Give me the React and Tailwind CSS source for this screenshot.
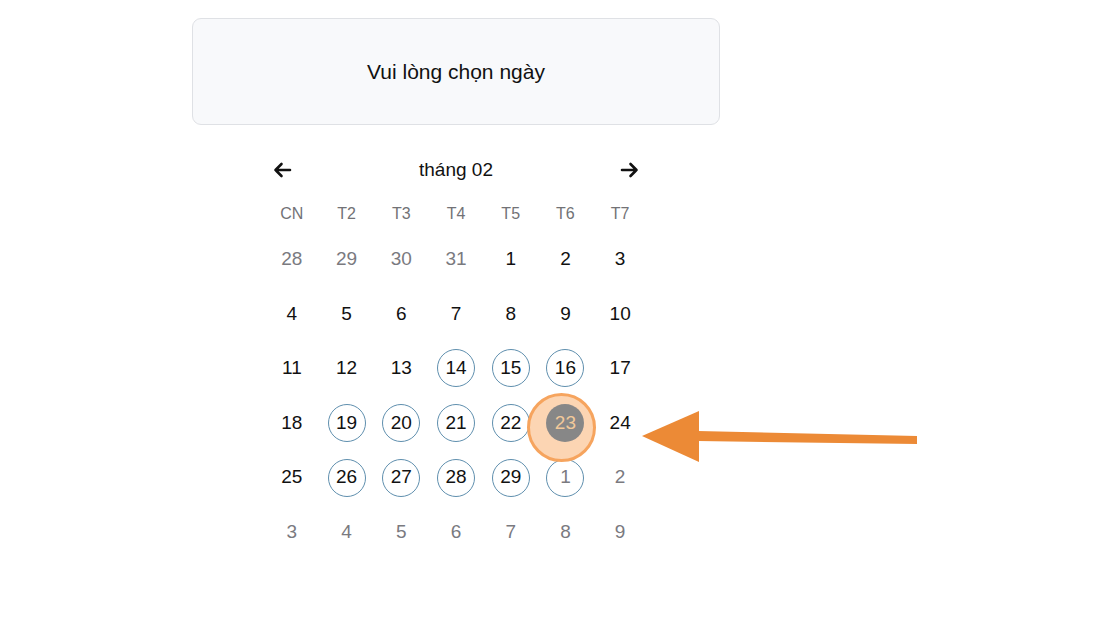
import React from 'react';

const weekdays = ['CN', 'T2', 'T3', 'T4', 'T5', 'T6', 'T7'];

// m: 0 = this month, -1 / 1 = neighbour months
const weeks = [
  [[28, -1], [29, -1], [30, -1], [31, -1], [1, 0], [2, 0], [3, 0]],
  [[4, 0], [5, 0], [6, 0], [7, 0], [8, 0], [9, 0], [10, 0]],
  [[11, 0], [12, 0], [13, 0], [14, 0, 'ring'], [15, 0, 'ring'], [16, 0, 'ring'], [17, 0]],
  [[18, 0], [19, 0, 'ring'], [20, 0, 'ring'], [21, 0, 'ring'], [22, 0, 'ring'], [23, 0, 'selected'], [24, 0]],
  [[25, 0], [26, 0, 'ring'], [27, 0, 'ring'], [28, 0, 'ring'], [29, 0, 'ring'], [1, 1, 'ring'], [2, 1]],
  [[3, 1], [4, 1], [5, 1], [6, 1], [7, 1], [8, 1], [9, 1]],
];

const DayCell = ({ day, month, state }) => {
  const textColor = month === 0 ? 'text-[#111111]' : 'text-[#7a7a7f]';

  if (state === 'selected') {
    return (
      <div className="relative flex items-center justify-center h-[54.6px]">
        {/* annotation highlight */}
        <div className="absolute left-[-11px] top-[-3px] w-[69px] h-[69px] rounded-full bg-[#fcd5b3] border-[3px] border-[#f6a45e]" />
        <div className="relative w-[38px] h-[38px] rounded-full bg-[#878787] flex items-center justify-center text-[19px] text-[#f2c99a]">
          {day}
        </div>
      </div>
    );
  }

  return (
    <div className="flex items-center justify-center h-[54.6px]">
      <div
        className={
          state === 'ring'
            ? `w-[38px] h-[38px] rounded-full border border-[#5f8fae] flex items-center justify-center text-[19px] ${textColor}`
            : `w-[38px] h-[38px] flex items-center justify-center text-[19px] ${textColor}`
        }
      >
        {day}
      </div>
    </div>
  );
};

const App = () => {
  return (
    <div className="relative w-[1120px] h-[626px] bg-white overflow-hidden" style={{ fontFamily: '"Liberation Sans", Arial, sans-serif' }}>
      <div className="ml-[192px] pt-[18px] w-[528px]">
        <div className="h-[107px] rounded-[9px] border border-[#dfe1e5] bg-[#f8f9fb] flex items-center justify-center">
          <span className="text-[21px] text-[#111111]">Vui lòng chọn ngày</span>
        </div>

        <div className="w-[383px] mx-auto">
          <div className="mt-[25px] h-[40px] flex items-center justify-between px-[8px]">
            <button className="w-[20px] h-[20px] flex items-center justify-center">
              <svg width="19" height="16" viewBox="0 0 19 16" fill="none" stroke="#111" strokeWidth="2.6" strokeLinecap="round" strokeLinejoin="round">
                <path d="M17 8H2.5M8.5 2L2.5 8l6 6" />
              </svg>
            </button>
            <span className="text-[19px] text-[#111111]">tháng 02</span>
            <button className="w-[20px] h-[20px] flex items-center justify-center">
              <svg width="19" height="16" viewBox="0 0 19 16" fill="none" stroke="#111" strokeWidth="2.6" strokeLinecap="round" strokeLinejoin="round">
                <path d="M2 8h14.5M10.5 2l6 6-6 6" />
              </svg>
            </button>
          </div>

          <div className="mt-[6px] h-[36px] grid grid-cols-7 items-center">
            {weekdays.map((w) => (
              <div key={w} className="text-center text-[16px] text-[#727276]">{w}</div>
            ))}
          </div>

          <div className="grid grid-cols-7">
            {weeks.flat().map(([day, month, state], i) => (
              <DayCell key={i} day={day} month={month} state={state} />
            ))}
          </div>
        </div>
      </div>

      {/* annotation arrow */}
      <svg className="absolute left-0 top-0 pointer-events-none" width="1120" height="626">
        <polygon points="698,431 917,436 917,444 698,441" fill="#ec8a36" />
        <polygon points="642,436 699,411 699,462" fill="#ec8a36" />
      </svg>
    </div>
  );
};

export default App;
